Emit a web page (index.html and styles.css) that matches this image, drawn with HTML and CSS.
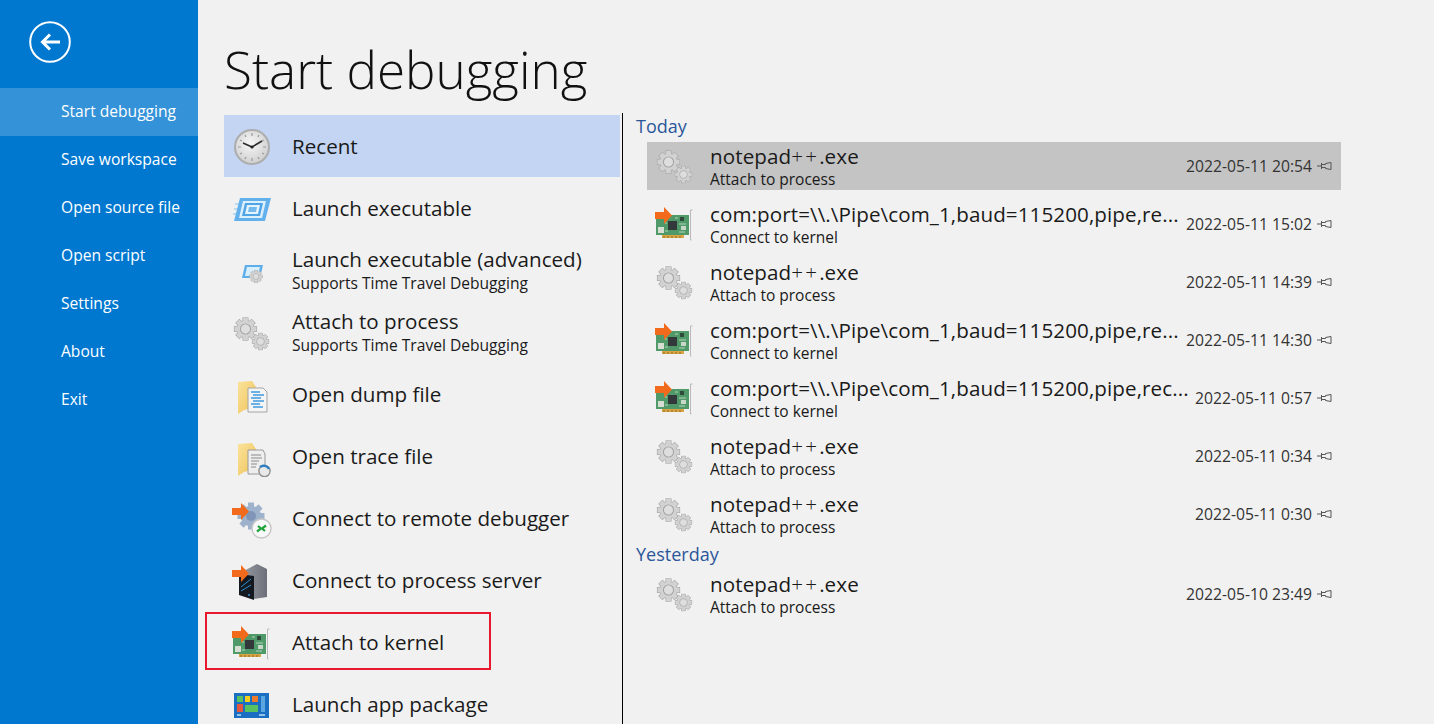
FILE: index.html
```html
<!DOCTYPE html>
<html lang="en">
<head>
    <meta charset="UTF-8">
    <title>Start debugging</title>
    <link rel="stylesheet" href="styles.css">
</head>
<body>
    <svg class="icon-defs" width="0" height="0">
        <defs>
            <radialGradient id="clock-face" cx="0.45" cy="0.4" r="0.7">
                <stop offset="0" stop-color="#f6f6f6"/>
                <stop offset="1" stop-color="#c9c9c9"/>
            </radialGradient>
            <linearGradient id="folder-fill" x1="0" y1="0" x2="1" y2="1">
                <stop offset="0" stop-color="#fbe39a"/>
                <stop offset="1" stop-color="#eec258"/>
            </linearGradient>
            <linearGradient id="tower-fill" x1="0" y1="0" x2="1" y2="0">
                <stop offset="0" stop-color="#9a9ea6"/>
                <stop offset="1" stop-color="#6d7078"/>
            </linearGradient>
            <!-- unit gear, 8 teeth, radius 10 -->
            <g id="gear-shape">
                <rect x="-2.2" y="-10" width="4.4" height="20"/>
                <rect x="-2.2" y="-10" width="4.4" height="20" transform="rotate(45)"/>
                <rect x="-2.2" y="-10" width="4.4" height="20" transform="rotate(90)"/>
                <rect x="-2.2" y="-10" width="4.4" height="20" transform="rotate(135)"/>
                <circle r="7.6"/>
            </g>
            <g id="gear">
                <use href="#gear-shape" fill="#a6a6a6" stroke="#a6a6a6" stroke-width="1.1"/>
                <use href="#gear-shape" fill="#d2d2d2"/>
                <circle r="4.6" fill="none" stroke="#a4a4a4" stroke-width="1"/>
                <circle r="4" fill="#dedede"/>
            </g>
            <symbol id="orange-arrow" viewBox="0 0 40 40">
                <polygon points="0,9 9,9 9,4 17,12.5 9,21 9,16 0,16" fill="#f26a1b"/>
            </symbol>
            <symbol id="ic-clock" viewBox="0 0 40 40">
                <circle cx="20" cy="20" r="17" fill="url(#clock-face)" stroke="#adadad" stroke-width="2"/>
                <path d="M20 6v3M20 31v3M6 20h3M31 20h3M13 8l1 2M27 8l-1 2M13 32l1-2M27 32l-1-2M8 13l2 1M32 13l-2 1M8 27l2-1M32 27l-2-1" stroke="#9a9a9a" stroke-width="1.2"/>
                <path d="M20 20L11 16M20 20L30 14" stroke="#2c2c2c" stroke-width="1.6" fill="none"/>
                <circle cx="20" cy="20" r="1.6" fill="#222"/>
            </symbol>
            <symbol id="ic-launch" viewBox="0 0 40 40">
                <path d="M3 15h5M2 20h5M1 25h5" stroke="#a5d2f3" stroke-width="1.5"/>
                <polygon points="8,9 39,9 33,32 2,32" fill="#62b0ec"/>
                <polygon points="11,12 34,12 30,29 7,29" fill="#dcf0fc"/>
                <polygon points="13,14 31,14 28,27 10,27" fill="#4fa4e6"/>
                <polygon points="15,16 28,16 26,25 13,25" fill="#e4f3fc"/>
                <polygon points="17,18 25,18 24,23 16,23" fill="#74b9ec"/>
            </symbol>
            <symbol id="ic-launch-adv" viewBox="0 0 40 40">
                <polygon points="13,14 31,14 28,27 10,27" fill="#5eaeea"/>
                <polygon points="15,16 28,16 26,25 13,25" fill="#d9eefb"/>
                <use href="#gear" transform="translate(24 25.5) scale(.62)"/>
            </symbol>
            <symbol id="ic-gears" viewBox="0 0 40 40">
                <use href="#gear" transform="translate(13.5 16) scale(1.1)"/>
                <use href="#gear" transform="translate(28.5 28.5) scale(.82)"/>
            </symbol>
            <symbol id="ic-dump" viewBox="0 0 40 40">
                <polygon points="6,7 20,6 24,12 24,32 12,35 6,39" fill="url(#folder-fill)"/>
                <polygon points="16,13 31,13 35,17 35,37 16,37" fill="#f4f4f4" stroke="#a4a4a4"/>
                <path d="M19 17h9M21 20h11M19 23h10M21 26h11M19 29h9M21 32h10" stroke="#3f9be0" stroke-width="1.4"/>
            </symbol>
            <symbol id="ic-trace" viewBox="0 0 40 40">
                <polygon points="6,7 20,6 24,12 24,32 12,35 6,39" fill="url(#folder-fill)"/>
                <polygon points="16,13 31,13 33,17 33,37 16,37" fill="#eeeeee" stroke="#9a9a9a"/>
                <path d="M19 18h10M19 21h11M19 24h8M19 27h6M19 30h5" stroke="#8a8a8a" stroke-width="1.2"/>
                <circle cx="32.5" cy="34" r="5.6" fill="#e9e9e9" stroke="#8f8f8f" stroke-width="1.4"/>
                <path d="M28 30a6 6 0 0 1 9 2" fill="none" stroke="#2f7fc4" stroke-width="2.4"/>
            </symbol>
            <symbol id="ic-remote" viewBox="0 0 40 40">
                <g fill="#9fb2cc">
                    <use href="#gear-shape" transform="translate(19 17) scale(1.35)"/>
                </g>
                <circle cx="19" cy="17" r="5" fill="#7f96b8"/>
                <circle cx="29.5" cy="29.5" r="9.5" fill="#f8f8f8" stroke="#c6c6c6" stroke-width="1.4"/>
                <path d="M25 32.5l4-3-3-2.5M34 26.5l-4 3 3 2.5" fill="none" stroke="#21a33c" stroke-width="2.2"/>
                <use href="#orange-arrow" width="40" height="40"/>
            </symbol>
            <symbol id="ic-server" viewBox="0 0 40 40">
                <polygon points="8,12 25,3 35,8 35,36 22,38" fill="url(#tower-fill)"/>
                <polygon points="7,13 22,15 22,39 7,34" fill="#14181f"/>
                <path d="M9 26l10-8M9 30l10-6" stroke="#2c8fd8" stroke-width="1"/>
                <circle cx="17" cy="34" r="0.9" fill="#3aa0e8"/>
                <use href="#orange-arrow" width="40" height="40"/>
            </symbol>
            <symbol id="ic-card" viewBox="0 0 40 40">
                <rect x="1" y="11" width="33" height="20" fill="#4f9a68"/>
                <rect x="7" y="31" width="22" height="3" fill="#d9a441"/>
                <path d="M9 32v2M13 32v2M17 32v2M21 32v2M25 32v2" stroke="#8a6a2a" stroke-width="1"/>
                <rect x="13" y="17" width="9" height="9" fill="#33393a"/>
                <rect x="25" y="13" width="4" height="4" fill="#2f4a3a"/>
                <rect x="26" y="22" width="5" height="4" fill="#c8d8c8"/>
                <rect x="3" y="23" width="6" height="6" fill="#d7dfd5"/>
                <path d="M20 14h3M24 20h7M24 28h6M10 19h2M10 27h3" stroke="#b7d3bd" stroke-width="1"/>
                <path d="M37.5 6h-2v30h1" fill="none" stroke="#b9b9b9" stroke-width="1"/>
                <use href="#orange-arrow" width="40" height="40" y="-1"/>
            </symbol>
            <symbol id="ic-app" viewBox="0 0 40 40">
                <rect x="2" y="8" width="35" height="25" fill="#1b6fc2"/>
                <rect x="5" y="11" width="6" height="6" fill="#57c25f"/>
                <rect x="13" y="11" width="5" height="6" fill="#f4cf1c"/>
                <rect x="20" y="11" width="6" height="6" fill="#ee7a2d"/>
                <rect x="5" y="19" width="6" height="8" fill="#e5563f"/>
                <rect x="13" y="20" width="13" height="7" fill="#57c25f"/>
                <rect x="29" y="11" width="4" height="16" fill="#5aa6e0"/>
                <path d="M5 30h4M27 30h6" stroke="#bfe0f5" stroke-width="1.4"/>
            </symbol>
            <symbol id="ic-pin" viewBox="0 0 15 8">
                <path d="M0 4h4" stroke="#555" stroke-width="1"/>
                <path d="M4.5 1v6" stroke="#555" stroke-width="1"/>
                <polygon points="4.5,2.5 8.5,2.5 8.5,1.5 14,0.5 14,7.5 8.5,6.5 8.5,5.5 4.5,5.5" fill="none" stroke="#555" stroke-width="1"/>
            </symbol>
        </defs>
    </svg>

    <div class="app">
        <!-- left blue menu -->
        <nav class="sidebar">
            <div class="back-wrap">
                <svg class="back-btn" width="42" height="42" viewBox="0 0 42 42">
                    <circle cx="21" cy="21" r="19.8" fill="none" stroke="#fff" stroke-width="2"/>
                    <path d="M31 21H14M21 13.5L13.5 21l7.5 7.5" fill="none" stroke="#fff" stroke-width="3"/>
                </svg>
            </div>
            <a class="nav-item active">Start debugging</a>
            <a class="nav-item">Save workspace</a>
            <a class="nav-item">Open source file</a>
            <a class="nav-item">Open script</a>
            <a class="nav-item">Settings</a>
            <a class="nav-item">About</a>
            <a class="nav-item">Exit</a>
        </nav>

        <main class="content">
            <h1 class="page-title">Start debugging</h1>
            <div class="columns">
                <!-- actions -->
                <div class="actions">
                    <div class="action selected">
                        <svg class="icon"><use href="#ic-clock"/></svg>
                        <div class="action-text">Recent</div>
                    </div>
                    <div class="action">
                        <svg class="icon"><use href="#ic-launch"/></svg>
                        <div class="action-text">Launch executable</div>
                    </div>
                    <div class="action">
                        <svg class="icon"><use href="#ic-launch-adv"/></svg>
                        <div class="action-text two-line">Launch executable (advanced)<small>Supports Time Travel Debugging</small></div>
                    </div>
                    <div class="action">
                        <svg class="icon"><use href="#ic-gears"/></svg>
                        <div class="action-text two-line">Attach to process<small>Supports Time Travel Debugging</small></div>
                    </div>
                    <div class="action">
                        <svg class="icon"><use href="#ic-dump"/></svg>
                        <div class="action-text">Open dump file</div>
                    </div>
                    <div class="action">
                        <svg class="icon"><use href="#ic-trace"/></svg>
                        <div class="action-text">Open trace file</div>
                    </div>
                    <div class="action">
                        <svg class="icon"><use href="#ic-remote"/></svg>
                        <div class="action-text">Connect to remote debugger</div>
                    </div>
                    <div class="action">
                        <svg class="icon"><use href="#ic-server"/></svg>
                        <div class="action-text">Connect to process server</div>
                    </div>
                    <div class="action marked">
                        <svg class="icon"><use href="#ic-card"/></svg>
                        <div class="action-text">Attach to kernel</div>
                    </div>
                    <div class="action">
                        <svg class="icon"><use href="#ic-app"/></svg>
                        <div class="action-text">Launch app package</div>
                    </div>
                </div>

                <!-- recent sessions -->
                <div class="recent">
                    <div class="group-title first">Today</div>
                    <div class="group-rows">
                        <div class="row selected">
                            <svg class="icon"><use href="#ic-gears"/></svg>
                            <div class="row-text"><div class="row-name">notepad<span class="plus">++</span>.exe</div><div class="row-sub">Attach to process</div></div>
                            <div class="row-time">2022-05-11 20:54</div>
                            <svg class="pin"><use href="#ic-pin"/></svg>
                        </div>
                        <div class="row">
                            <svg class="icon"><use href="#ic-card"/></svg>
                            <div class="row-text"><div class="row-name">com:port=\\.\Pipe\com_1,baud=115200,pipe,re...</div><div class="row-sub">Connect to kernel</div></div>
                            <div class="row-time">2022-05-11 15:02</div>
                            <svg class="pin"><use href="#ic-pin"/></svg>
                        </div>
                        <div class="row">
                            <svg class="icon"><use href="#ic-gears"/></svg>
                            <div class="row-text"><div class="row-name">notepad<span class="plus">++</span>.exe</div><div class="row-sub">Attach to process</div></div>
                            <div class="row-time">2022-05-11 14:39</div>
                            <svg class="pin"><use href="#ic-pin"/></svg>
                        </div>
                        <div class="row">
                            <svg class="icon"><use href="#ic-card"/></svg>
                            <div class="row-text"><div class="row-name">com:port=\\.\Pipe\com_1,baud=115200,pipe,re...</div><div class="row-sub">Connect to kernel</div></div>
                            <div class="row-time">2022-05-11 14:30</div>
                            <svg class="pin"><use href="#ic-pin"/></svg>
                        </div>
                        <div class="row">
                            <svg class="icon"><use href="#ic-card"/></svg>
                            <div class="row-text"><div class="row-name">com:port=\\.\Pipe\com_1,baud=115200,pipe,rec...</div><div class="row-sub">Connect to kernel</div></div>
                            <div class="row-time">2022-05-11 0:57</div>
                            <svg class="pin"><use href="#ic-pin"/></svg>
                        </div>
                        <div class="row">
                            <svg class="icon"><use href="#ic-gears"/></svg>
                            <div class="row-text"><div class="row-name">notepad<span class="plus">++</span>.exe</div><div class="row-sub">Attach to process</div></div>
                            <div class="row-time">2022-05-11 0:34</div>
                            <svg class="pin"><use href="#ic-pin"/></svg>
                        </div>
                        <div class="row">
                            <svg class="icon"><use href="#ic-gears"/></svg>
                            <div class="row-text"><div class="row-name">notepad<span class="plus">++</span>.exe</div><div class="row-sub">Attach to process</div></div>
                            <div class="row-time">2022-05-11 0:30</div>
                            <svg class="pin"><use href="#ic-pin"/></svg>
                        </div>
                    </div>
                    <div class="group-title">Yesterday</div>
                    <div class="group-rows">
                        <div class="row">
                            <svg class="icon"><use href="#ic-gears"/></svg>
                            <div class="row-text"><div class="row-name">notepad<span class="plus">++</span>.exe</div><div class="row-sub">Attach to process</div></div>
                            <div class="row-time">2022-05-10 23:49</div>
                            <svg class="pin"><use href="#ic-pin"/></svg>
                        </div>
                    </div>
                </div>
            </div>
        </main>
    </div>
</body>
</html>
```

FILE: styles.css
```css
/* General */
html, body {
    margin: 0;
    height: 100%;
    overflow: hidden;
}

body {
    font-family: "Open Sans", "Noto Sans", sans-serif;
    background-color: #f1f1f1;
    color: #1a1a1a;
}

.icon-defs {
    position: absolute;
}

.app {
    display: flex;
    height: 100vh;
}

/* Blue menu */
.sidebar {
    width: 198px;
    flex-shrink: 0;
    background-color: #0078d0;
    color: #fff;
}

.back-wrap {
    height: 88px;
    padding: 21px 0 0 29px;
    box-sizing: border-box;
}

.back-btn {
    display: block;
}

.nav-item {
    display: flex;
    align-items: center;
    height: 48px;
    padding: 0 0 2px 61px;
    box-sizing: border-box;
    font-size: 15.6px;
}

.nav-item.active {
    background-color: #3492d8;
}

/* Main area */
.content {
    flex: 1;
    min-width: 0;
    padding-left: 26px;
}

.page-title {
    height: 115px;
    margin: 0;
    padding-top: 33px;
    box-sizing: border-box;
    font-size: 51.2px;
    line-height: 72px;
    font-weight: 300;
    color: #111;
}

.columns {
    display: flex;
}

.actions {
    width: 396px;
    flex-shrink: 0;
}

.action {
    position: relative;
    display: flex;
    align-items: center;
    gap: 20px;
    height: 62px;
    padding-left: 8px;
    box-sizing: border-box;
}

.action.selected {
    background-color: #c3d5f2;
}

/* red annotation around Attach to kernel */
.action.marked::after {
    content: "";
    position: absolute;
    left: -19px;
    top: 1px;
    width: 282px;
    height: 54px;
    border: 2px solid #e8192c;
}

.icon {
    width: 40px;
    height: 40px;
    flex-shrink: 0;
}

.action .icon {
    margin-top: 1px;
}

.action-text {
    font-size: 20.6px;
    line-height: 24px;
}

.action-text.two-line {
    margin-bottom: 1px;
}

.action-text small {
    display: block;
    margin-top: 3px;
    font-size: 15.6px;
    line-height: 18px;
}

/* Recent list */
.recent {
    flex: 1;
    min-width: 0;
    margin: -2px 93px 0 2px;
    padding-left: 13px;
    border-left: 1px solid #000;
    height: 611px;
}

.group-title {
    height: 32px;
    line-height: 32px;
    font-size: 18px;
    color: #2b579a;
}

.group-title.first {
    margin-top: -3px;
}

.group-rows {
    display: flex;
    flex-direction: column;
    gap: 10px;
    margin-left: 11px;
}

.row {
    display: flex;
    align-items: center;
    height: 48px;
    padding: 0 9px 0 8px;
}

.row.selected {
    background-color: #c4c4c4;
}

.row-text {
    flex: 1;
    min-width: 0;
    margin-left: 15px;
}

.row-name {
    font-size: 20.6px;
    line-height: 24px;
    letter-spacing: 0.09px;
    white-space: nowrap;
}

/* the ++ is drawn wide and thin in the original font */
.plus {
    font-weight: 300;
    letter-spacing: 2.2px;
}

.row-sub {
    margin-top: 2px;
    font-size: 15.5px;
    line-height: 18px;
}

.row-time {
    margin-left: 6px;
    font-size: 15.7px;
    color: #333;
}

.pin {
    width: 15px;
    height: 8px;
    margin-left: 5px;
    flex-shrink: 0;
}
```
